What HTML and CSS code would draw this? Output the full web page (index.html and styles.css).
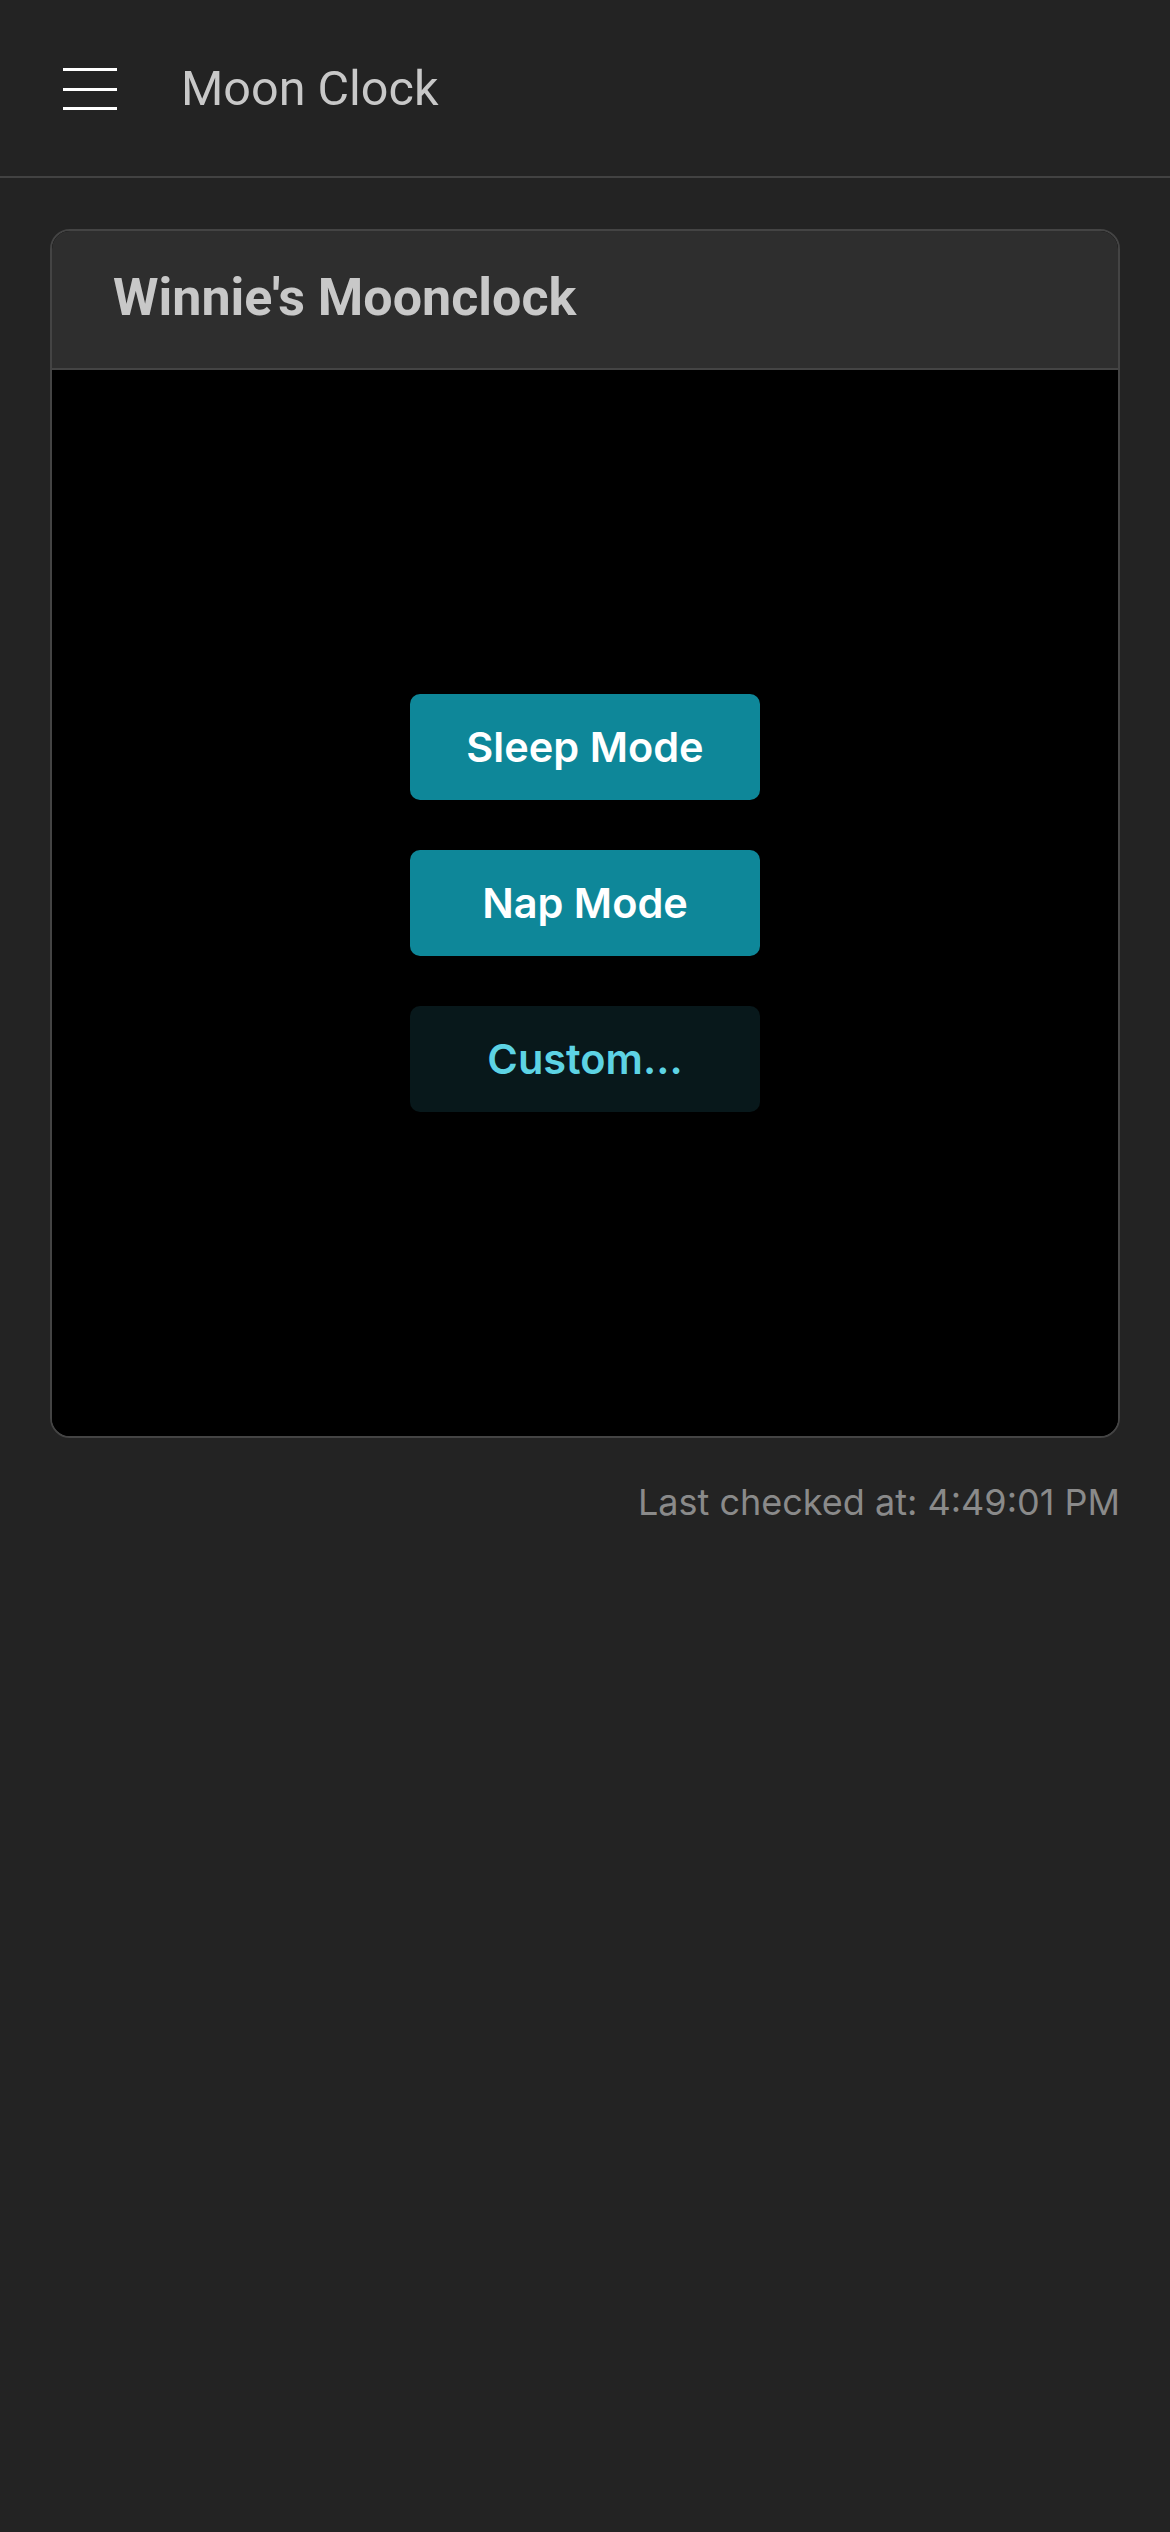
FILE: index.html
```html
<!DOCTYPE html>
<html lang="en">
<head>
<meta charset="utf-8">
<title>Moon Clock</title>
<link rel="stylesheet" href="styles.css">
</head>
<body>
<header class="topbar">
  <button class="menu-btn" aria-label="Menu">
    <span class="bar"></span>
    <span class="bar"></span>
    <span class="bar"></span>
  </button>
  <h1 class="app-title">Moon Clock</h1>
</header>
<main class="content">
  <section class="card">
    <div class="card-header">
      <h2 class="card-title">Winnie's Moonclock</h2>
    </div>
    <div class="card-body">
      <div class="actions">
        <button class="btn btn-primary">Sleep Mode</button>
        <button class="btn btn-primary">Nap Mode</button>
        <button class="btn btn-ghost">Custom...</button>
      </div>
    </div>
  </section>
  <p class="status">Last checked at: 4:49:01 PM</p>
</main>
</body>
</html>
```
FILE: styles.css
```css
* { box-sizing: border-box; }
html, body {
  margin: 0;
  padding: 0;
  background: #232323;
  min-height: 100%;
}
body {
  font-family: Roboto, "Liberation Sans", sans-serif;
  color: #c8c8c8;
}
.topbar {
  height: 178px;
  display: flex;
  align-items: center;
  padding-left: 63px;
  padding-top: 2px;
  border-bottom: 2px solid #424242;
}
.menu-btn {
  width: 54px;
  height: 42px;
  padding: 0;
  border: 0;
  background: transparent;
  display: flex;
  flex-direction: column;
  justify-content: space-between;
  align-items: flex-start;
}
.bar {
  display: block;
  width: 54px;
  height: 3px;
  background: #ffffff;
}
.app-title {
  margin: 0 0 0 64px;
  font-size: 48.5px;
  font-weight: 400;
  color: #c8c8c8;
  line-height: 1;
}
.content {
  padding: 51px 50px 0;
}
.card {
  border: 2px solid #444444;
  border-radius: 20px;
  overflow: hidden;
  background: #000;
}
.card-header {
  height: 139px;
  background: #2e2e2e;
  border-bottom: 2px solid #444444;
  display: flex;
  align-items: center;
  padding-left: 61px;
  padding-bottom: 3px;
}
.card-title {
  margin: 0;
  font-size: 52px;
  font-weight: 700;
  color: #c8c8c8;
  line-height: 1;
}
.card-body {
  aspect-ratio: 1 / 1;
  background: #000;
  display: flex;
  align-items: center;
  justify-content: center;
}
.actions {
  display: flex;
  flex-direction: column;
  gap: 50px;
}
.btn {
  width: 350px;
  height: 106px;
  border: 0;
  border-radius: 10px;
  font-family: Inter, "Noto Sans", sans-serif;
  font-size: 41.5px;
  font-weight: 600;
  cursor: pointer;
}
.btn-primary {
  background: #0e8799;
  color: #ffffff;
}
.btn-ghost {
  background: #08181b;
  color: #5dd3e4;
}
.status {
  margin: 42px 0 0;
  text-align: right;
  font-family: Inter, "Noto Sans", sans-serif;
  font-size: 36px;
  font-weight: 400;
  color: #8a8a8a;
}
```
